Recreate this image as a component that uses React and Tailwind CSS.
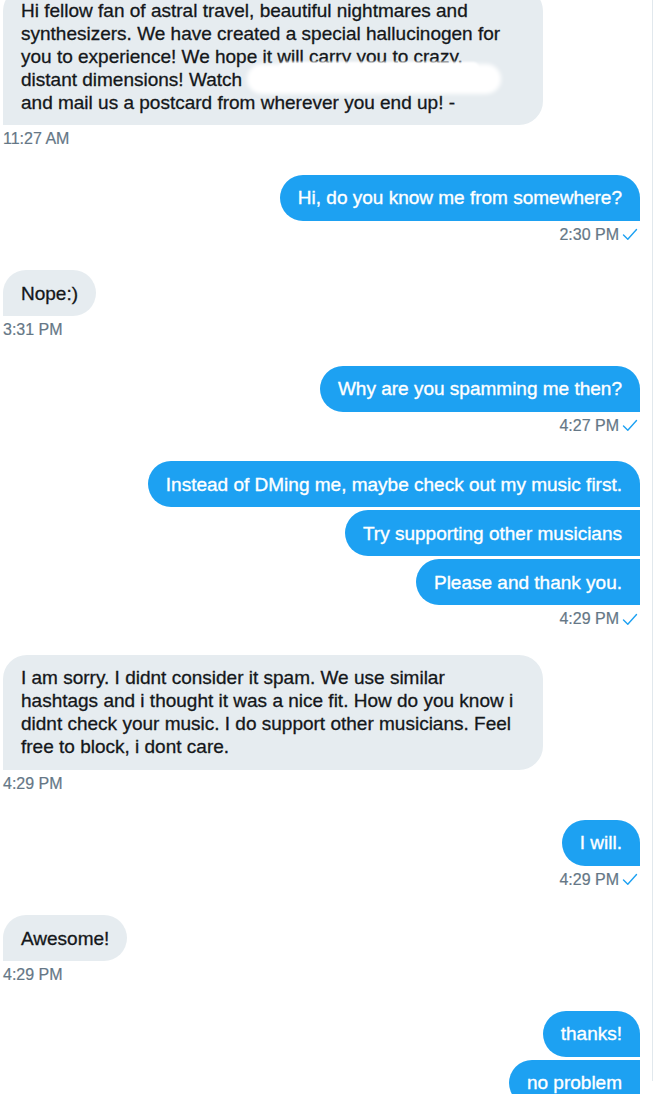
import React from 'react';

const font = { fontFamily: '"Liberation Sans", Arial, sans-serif' };

const Check = () => (
    <svg width="16" height="13" viewBox="0 0 16 13" className="ml-[3px]">
        <path d="M1.5 7 L5.8 11.2 L14.5 1.5" fill="none" stroke="#1da1f2" strokeWidth="1.4" strokeLinecap="round" strokeLinejoin="round" />
    </svg>
);

const Stamp = ({ time, mine }) => (
    <div className={`mt-1 h-5 flex items-center text-[16px] leading-5 text-[#657786] [-webkit-text-stroke:0.2px_#657786] ${mine ? 'justify-end pr-[2px]' : 'justify-start'}`}>
        {time}
        {mine && <Check />}
    </div>
);

const Theirs = ({ lines, wide }) => (
    <div className={`self-start bg-[#e6ecf0] text-[#14171a] [-webkit-text-stroke:0.3px_#14171a] rounded-[24px] rounded-bl-none px-[18px] py-[11.5px] text-[19px] leading-[23px] ${wide ? 'w-[540px]' : ''}`}>
        {lines.map((l, i) => (
            <div key={i} className="whitespace-nowrap">{l}</div>
        ))}
    </div>
);

// group of my own bubbles, first one keeps its top-right corner
const Mine = ({ texts }) => (
    <div className="flex flex-col items-end gap-[3px]">
        {texts.map((t, i) => (
            <div
                key={i}
                className={`bg-[#1da1f2] text-white [-webkit-text-stroke:0.35px_#ffffff] rounded-[23px] rounded-br-none px-[18px] py-[11.5px] text-[19px] leading-[23px] whitespace-nowrap ${i > 0 ? 'rounded-tr-none' : ''}`}
            >
                {t}
            </div>
        ))}
    </div>
);

export default function App() {
    return (
        <div className="w-[656px] h-[1094px] overflow-hidden bg-white" style={font}>
            <div className="w-[653px] h-full border-r border-[#e1e8ed] pl-[3px] pr-[12px]">
                <div className="flex flex-col mt-[-13px]">
                    {/* first message, part of the link is blotted out */}
                    <div className="relative self-start">
                        <Theirs
                            wide
                            lines={[
                                'Hi fellow fan of astral travel, beautiful nightmares and',
                                'synthesizers. We have created a special hallucinogen for',
                                'you to experience! We hope it will carry you to crazy,',
                                'distant dimensions! Watch',
                                'and mail us a postcard from wherever you end up! -',
                            ]}
                        />
                        <div className="absolute left-[244px] top-[77px] w-[254px] h-[30px] bg-white rounded-[16px] blur-[2px]" />
                        <div className="absolute left-[276px] top-[75px] w-[200px] h-[12px] bg-white rounded-full blur-[1px]" />
                    </div>
                    <Stamp time="11:27 AM" />

                    <div className="mt-[25.6px]">
                        <Mine texts={['Hi, do you know me from somewhere?']} />
                    </div>
                    <Stamp time="2:30 PM" mine />

                    <div className="mt-[25.6px] flex flex-col">
                        <Theirs lines={['Nope:)']} />
                    </div>
                    <Stamp time="3:31 PM" />

                    <div className="mt-[25.6px]">
                        <Mine texts={['Why are you spamming me then?']} />
                    </div>
                    <Stamp time="4:27 PM" mine />

                    <div className="mt-[25.6px]">
                        <Mine
                            texts={[
                                'Instead of DMing me, maybe check out my music first.',
                                'Try supporting other musicians',
                                'Please and thank you.',
                            ]}
                        />
                    </div>
                    <Stamp time="4:29 PM" mine />

                    <div className="mt-[25.6px] flex flex-col">
                        <Theirs
                            wide
                            lines={[
                                'I am sorry. I didnt consider it spam. We use similar',
                                'hashtags and i thought it was a nice fit. How do you know i',
                                'didnt check your music. I do support other musicians. Feel',
                                'free to block, i dont care.',
                            ]}
                        />
                    </div>
                    <Stamp time="4:29 PM" />

                    <div className="mt-[25.6px]">
                        <Mine texts={['I will.']} />
                    </div>
                    <Stamp time="4:29 PM" mine />

                    <div className="mt-[25.6px] flex flex-col">
                        <Theirs lines={['Awesome!']} />
                    </div>
                    <Stamp time="4:29 PM" />

                    <div className="mt-[25.6px]">
                        <Mine texts={['thanks!', 'no problem']} />
                    </div>
                </div>
            </div>
        </div>
    );
}
